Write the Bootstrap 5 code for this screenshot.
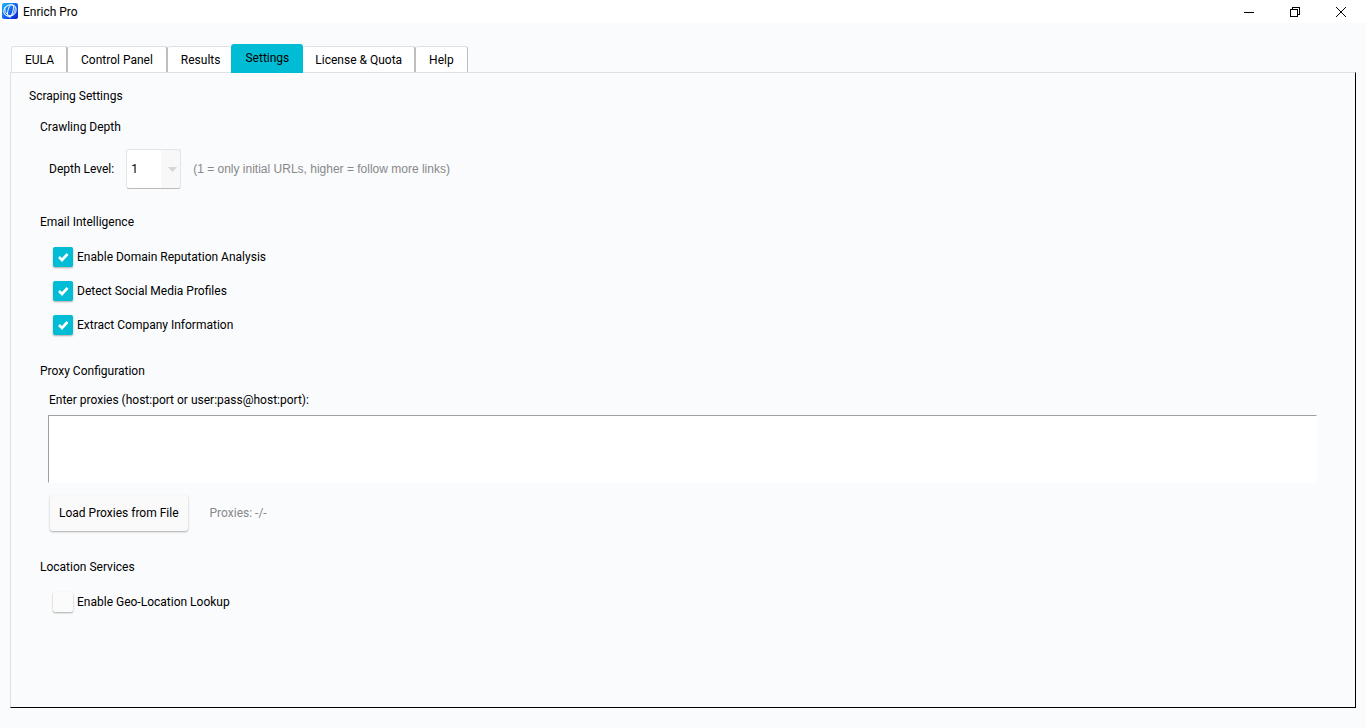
<!DOCTYPE html>
<html lang="en">
<head>
<meta charset="utf-8">
<meta name="viewport" content="width=device-width, initial-scale=1">
<title>Enrich Pro</title>
<link href="https://cdn.jsdelivr.net/npm/bootstrap@5.3.0/dist/css/bootstrap.min.css" rel="stylesheet">
<style>
  body { font: 12px/18px Roboto, "Open Sans", sans-serif; color: #000; background: #fafbfd; }
  .titlebar { height: 23px; background: #fff; padding-left: 2px; }
  .app-name { margin-left: 4px; }
  .win-buttons { margin-right: 2px; }
  .win-btn { width: 46px; height: 21px; background: none; }
  .main-area { padding: 21px 10px 20px; }
  .app-tabs { border: 0; padding-left: 1px; position: relative; z-index: 1; }
  .app-tabs .nav-link { height: 26px; padding: 4px 13px; border: 0 solid #bdbdbd; border-top: 1px solid #e0e0e0; border-right-width: 2px; border-radius: 3px 3px 0 0; background: #fff; color: #000; margin: 0; }
  .app-tabs .nav-link:first-child { border-left: 1px solid #e0e0e0; padding-right: 12px; }
  .app-tabs .nav-link:last-child { border-right-width: 1px; }
  .app-tabs .nav-link.active { height: 29px; padding: 5px 14px; background: #00bcd4; border: 0; margin-bottom: -1px; }
  .app-tabs .before-active { border-right-width: 0; padding-right: 11px; }
  .app-tabs .after-active { padding: 4px 12px; }
  .settings-panel { border: 1px solid #e0e0e0; border-right-color: #000; border-bottom-color: #000; padding: 14px 37px 14px 18px; }
  .group { padding-left: 11px; }
  .group-body { padding-left: 9px; }
  h1, h2 { font-size: 12px; line-height: 18px; font-weight: 400; margin: 0; }
  .group-depth { margin-top: 13px; }
  .group-email { margin-top: 24px; }
  .group-proxy { margin-top: 20px; }
  .group-location { margin-top: 27px; }
  .depth-row { margin-top: 13px; gap: 12px; }
  .checks { margin-top: 9px; }
  .depth-select { width: 55px; height: 40px; padding: 0 4px; font: inherit; color: #000; appearance: none; border: 1px solid #e4e4e4; border-bottom-color: #bbb; border-radius: 3px;
    background: url("data:image/svg+xml,%3Csvg xmlns='http://www.w3.org/2000/svg' width='19' height='40'%3E%3Cpath fill='%23f8f8f8' d='M0 0h19v40H0z'/%3E%3Cpath fill='%23d0d8da' d='M7 18h9l-4.500 5z'/%3E%3C/svg%3E") right center no-repeat #fff; }
  .hint { font: 12px/18px "Liberation Sans", Arial, sans-serif; color: #888; }
  .check-row { height: 34px; padding-left: 4px; gap: 4px; }
  .check-row .form-check-input { width: 20px; height: 20px; margin: 0; border: 0; border-radius: 2px; background-color: #fbfbfb; box-shadow: 0 1px 2px #aaa; }
  .check-row .form-check-input:checked { background-color: #00bcd4; background-size: 20px 20px;
    background-image: url("data:image/svg+xml,%3Csvg xmlns='http://www.w3.org/2000/svg' viewBox='0 0 20 20'%3E%3Cpath d='M6 10l3 3 5.500-6' fill='none' stroke='%23fff' stroke-width='2.600'/%3E%3C/svg%3E"); }
  .proxy-label { margin-top: 11px; margin-bottom: 6px; }
  .proxy-box { height: 68px; margin-left: -1px; border: 1px solid #fff; border-top-color: #a0a0a0; border-left-color: #a0a0a0; resize: none; background: #fff; }
  .load-row { margin-top: 12px; gap: 22px; }
  .load-btn { height: 36px; padding: 0 9px; margin-left: 1px; font-size: 12px; line-height: 18px; color: #000; background: #fafafa; border: 0; border-radius: 3px; box-shadow: 0 1px 2px #aaa; }
  .muted-note { color: #888; }
</style>
</head>
<body class="d-flex flex-column min-vh-100">
<header class="titlebar d-flex align-items-center">
  <svg width="17" height="17" viewBox="0 0 17 17" aria-hidden="true">
    <defs><linearGradient id="logo" x2="1" y2="1"><stop stop-color="#20b8f4"/><stop offset=".5" stop-color="#1468f0"/><stop offset="1" stop-color="#0a1cc8"/></linearGradient></defs>
    <rect width="16" height="16" rx="2" fill="url(#logo)"/>
    <g fill="none" stroke="#e4f5ff"><ellipse cx="8" cy="7.500" rx="6.500" ry="5.500" transform="rotate(-30 8 7.500)"/><ellipse cx="8.500" cy="7.500" rx="2.500" ry="6" transform="rotate(15 8.500 7.500)"/><path d="M3 4c-1 5 2 8 5 9 3-1 6-5 5-9M8 12v3"/></g>
  </svg>
  <span class="app-name">Enrich Pro</span>
  <div class="win-buttons ms-auto d-flex">
    <button class="win-btn border-0 p-0 d-flex align-items-center justify-content-center" aria-label="Minimize"><svg width="10" height="10" shape-rendering="crispEdges"><path d="M0 5h10v1H0z"/></svg></button>
    <button class="win-btn border-0 p-0 d-flex align-items-center justify-content-center" aria-label="Restore"><svg width="10" height="10" fill="none" stroke="#000" shape-rendering="crispEdges"><path d="M.5 2.500h7v7h-7zM2.500 2V.5h7v7H8"/></svg></button>
    <button class="win-btn border-0 p-0 d-flex align-items-center justify-content-center" aria-label="Close"><svg width="10" height="10" stroke="#000"><path d="M0 0l10 10M10 0L0 10"/></svg></button>
  </div>
</header>
<main class="main-area flex-grow-1 d-flex flex-column">
  <nav class="nav nav-tabs app-tabs align-items-end" aria-label="Sections">
    <a class="nav-link" href="#">EULA</a>
    <a class="nav-link" href="#">Control Panel</a>
    <a class="nav-link before-active" href="#">Results</a>
    <a class="nav-link active" aria-current="page" href="#">Settings</a>
    <a class="nav-link after-active" href="#">License &amp; Quota</a>
    <a class="nav-link" href="#">Help</a>
  </nav>
  <div class="settings-panel flex-grow-1">
    <h1>Scraping Settings</h1>
    <section class="group group-depth">
      <h2>Crawling Depth</h2>
      <div class="group-body depth-row d-flex align-items-center">
        <label for="depth">Depth Level:</label>
        <select class="depth-select" id="depth"><option>1</option><option>2</option><option>3</option></select>
        <span class="hint">(1 = only initial URLs, higher = follow more links)</span>
      </div>
    </section>
    <section class="group group-email">
      <h2>Email Intelligence</h2>
      <div class="group-body checks">
        <div class="check-row d-flex align-items-center"><input class="form-check-input" type="checkbox" id="domain" checked><label for="domain">Enable Domain Reputation Analysis</label></div>
        <div class="check-row d-flex align-items-center"><input class="form-check-input" type="checkbox" id="social" checked><label for="social">Detect Social Media Profiles</label></div>
        <div class="check-row d-flex align-items-center"><input class="form-check-input" type="checkbox" id="company" checked><label for="company">Extract Company Information</label></div>
      </div>
    </section>
    <section class="group group-proxy">
      <h2>Proxy Configuration</h2>
      <div class="group-body">
        <label class="proxy-label d-block" for="proxies">Enter proxies (host:port or user:pass@host:port):</label>
        <textarea class="proxy-box d-block w-100" id="proxies"></textarea>
        <div class="load-row d-flex align-items-center">
          <button class="load-btn" type="button">Load Proxies from File</button>
          <span class="muted-note">Proxies: -/-</span>
        </div>
      </div>
    </section>
    <section class="group group-location">
      <h2>Location Services</h2>
      <div class="group-body checks">
        <div class="check-row d-flex align-items-center"><input class="form-check-input" type="checkbox" id="geo"><label for="geo">Enable Geo-Location Lookup</label></div>
      </div>
    </section>
  </div>
</main>
<script src="https://cdn.jsdelivr.net/npm/bootstrap@5.3.0/dist/js/bootstrap.bundle.min.js"></script>
</body>
</html>
